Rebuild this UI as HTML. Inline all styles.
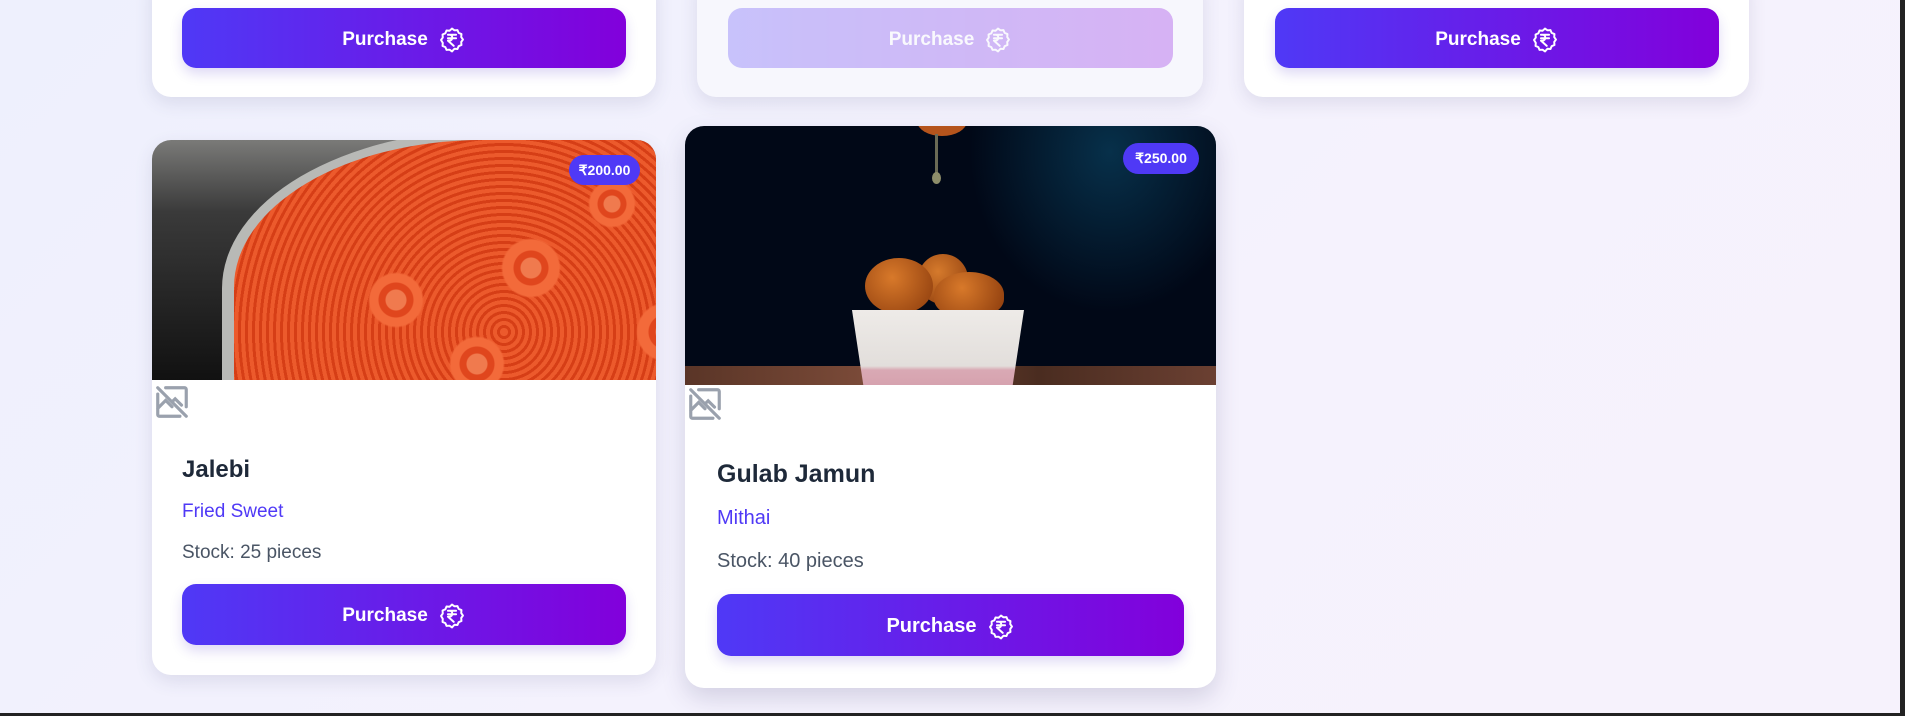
<!DOCTYPE html>
<html><head><meta charset="utf-8"><style>
*{box-sizing:border-box;margin:0;padding:0}
body{width:1905px;height:716px;overflow:hidden;background:linear-gradient(135deg,#eef0fd,#f5f2fd 60%,#f6f2fc);font-family:"Liberation Sans",sans-serif;position:relative}
.card{position:absolute;background:#fff;border-radius:19px;box-shadow:0 6px 18px rgba(60,60,110,.12);overflow:hidden}
.btn{position:absolute;border-radius:14px;background:linear-gradient(90deg,#4f39f6,#8200db);color:#fff;font-weight:bold;font-size:19px;display:flex;align-items:center;justify-content:center;gap:10px;padding-top:3px;box-shadow:0 6px 12px rgba(80,50,200,.18)}
.ico{width:28px;height:28px}
.badge{position:absolute;background:#4f39f6;color:#fff;font-weight:bold;font-size:14px;border-radius:16px;display:flex;align-items:center;justify-content:center}
.t{position:absolute;font-weight:bold;color:#1e2939}
.c{position:absolute;color:#4f39f6}
.s{position:absolute;color:#4a5565}
.broken{position:absolute}
</style></head><body>
<svg width="0" height="0" style="position:absolute"><defs>
<symbol id="rs" viewBox="0 0 24 24"><path d="M12 2.2l2.1 1.5 2.6-.2 1 2.4 2.4 1-.2 2.6 1.5 2.1-1.5 2.1.2 2.6-2.4 1-1 2.4-2.6-.2L12 21.8l-2.1-1.5-2.6.2-1-2.4-2.4-1 .2-2.6L2.6 12l1.5-2.1-.2-2.6 2.4-1 1-2.4 2.6.2z" fill="none" stroke="#fff" stroke-width="1.7" stroke-linejoin="round"/><path d="M8.5 7.5h7M8.5 10.5h7M10 7.5c3 0 3 5 0 5H8.5l5 4.5" fill="none" stroke="#fff" stroke-width="1.7" stroke-linecap="round" stroke-linejoin="round"/></symbol>
<symbol id="bi" viewBox="0 0 24 24"><path d="M3 3l18 18M21 15V4a1 1 0 0 0-1-1H8M3 7v13a1 1 0 0 0 1 1h13M3 16l5-5 4 4M13 11l1-1 4 4" fill="none" stroke="#9aa1ad" stroke-width="2" stroke-linecap="round"/></symbol>
</defs></svg>

<div class="card" style="left:152px;top:-30px;width:504px;height:127px"></div>
<div class="btn" style="left:182px;top:8px;width:444px;height:60px">Purchase <svg class="ico"><use href="#rs"/></svg></div>
<div class="card" style="left:697px;top:-30px;width:506px;height:127px;background:#f7f7fd"></div>
<div class="btn" style="left:728px;top:8px;width:445px;height:60px;opacity:.28;box-shadow:none">Purchase <svg class="ico"><use href="#rs"/></svg></div>
<div class="card" style="left:1244px;top:-30px;width:505px;height:127px"></div>
<div class="btn" style="left:1275px;top:8px;width:444px;height:60px">Purchase <svg class="ico"><use href="#rs"/></svg></div>

<!-- Jalebi -->
<div class="card" style="left:152px;top:140px;width:504px;height:535px">
 <div style="position:absolute;left:0;top:0;width:504px;height:240px;overflow:hidden;background:linear-gradient(180deg,#7a7a78 0%,#3a3a3a 30%,#111 100%)">
 <div style="position:absolute;left:70px;top:-10px;width:560px;height:330px;border-radius:48% 0 0 0;background:#b8b9b6"></div>
 <div style="position:absolute;left:82px;top:0px;width:540px;height:320px;border-radius:46% 0 0 0;background:
  radial-gradient(circle at 30% 50%,#f07a4e 0 10px,#e0461d 11px 17px,#f36a3a 18px 26px,transparent 28px),
  radial-gradient(circle at 55% 40%,#f07a4e 0 10px,#e0461d 11px 17px,#f36a3a 18px 28px,transparent 30px),
  radial-gradient(circle at 80% 60%,#f07a4e 0 10px,#e0461d 11px 17px,#f36a3a 18px 28px,transparent 30px),
  radial-gradient(circle at 45% 70%,#f07a4e 0 10px,#e0461d 11px 17px,#f36a3a 18px 26px,transparent 28px),
  radial-gradient(circle at 70% 20%,#f07a4e 0 8px,#e0461d 9px 14px,#f36a3a 15px 22px,transparent 24px),
  repeating-radial-gradient(circle at 50% 60%,#ec5a2c 0 4px,#d63e16 4px 7px),#e34a1e"></div>
 </div>
</div>
<div class="badge" style="left:569px;top:155px;width:71px;height:30px">₹200.00</div>
<svg class="broken" style="left:153px;top:383px" width="38" height="38"><use href="#bi"/></svg>
<div class="t" style="left:182px;top:456px;font-size:24px">Jalebi</div>
<div class="c" style="left:182px;top:501px;font-size:19px">Fried Sweet</div>
<div class="s" style="left:182px;top:542px;font-size:19px">Stock: 25 pieces</div>
<div class="btn" style="left:182px;top:584px;width:444px;height:61px">Purchase <svg class="ico"><use href="#rs"/></svg></div>

<!-- Gulab Jamun -->
<div class="card" style="left:685px;top:126px;width:531px;height:562px;box-shadow:0 10px 24px rgba(60,60,110,.18)">
 <div style="position:absolute;left:0;top:0;width:531px;height:259px;background:radial-gradient(ellipse 140px 160px at 80% 10%,#07304a,transparent),#010817;overflow:hidden">
  <div style="position:absolute;left:0;top:240px;width:531px;height:20px;background:linear-gradient(90deg,#5a3527,#7a4a38,#4a2c20,#6b4032)"></div>
  <div style="position:absolute;left:232px;top:-20px;width:50px;height:30px;border-radius:50%;background:#b5541c"></div>
  <div style="position:absolute;left:250px;top:8px;width:3px;height:40px;background:#6a6a55"></div>
  <div style="position:absolute;left:247px;top:46px;width:9px;height:12px;border-radius:50%;background:#8d8d6a"></div>
  <div style="position:absolute;left:233px;top:128px;width:50px;height:50px;border-radius:50%;background:radial-gradient(circle at 40% 35%,#d57a2c,#8a3a0c)"></div>
  <div style="position:absolute;left:180px;top:132px;width:68px;height:56px;border-radius:50%;background:radial-gradient(circle at 40% 35%,#d8792a,#8a3a0c)"></div>
  <div style="position:absolute;left:249px;top:146px;width:70px;height:45px;border-radius:50% 50% 40% 40%;background:radial-gradient(circle at 40% 35%,#d8792a,#8a3a0c)"></div>
  <div style="position:absolute;left:167px;top:184px;width:172px;height:80px;background:linear-gradient(180deg,#eeebe8 0%,#e2dedb 70%,#d9a9b4 75%,#d5a0ad 100%);clip-path:polygon(0 0,100% 0,93% 100%,7% 100%)"></div>
 </div>
</div>
<div class="badge" style="left:1123px;top:143px;width:76px;height:31px">₹250.00</div>
<svg class="broken" style="left:686px;top:385px" width="38" height="38"><use href="#bi"/></svg>
<div class="t" style="left:717px;top:460px;font-size:25px">Gulab Jamun</div>
<div class="c" style="left:717px;top:507px;font-size:20px">Mithai</div>
<div class="s" style="left:717px;top:550px;font-size:20px">Stock: 40 pieces</div>
<div class="btn" style="left:717px;top:594px;width:467px;height:62px;font-size:20px">Purchase <svg class="ico"><use href="#rs"/></svg></div>

<div style="position:absolute;left:1900px;top:0;width:5px;height:716px;background:#222"></div>
<div style="position:absolute;left:0;top:713px;width:1905px;height:3px;background:#222"></div>
</body></html>
